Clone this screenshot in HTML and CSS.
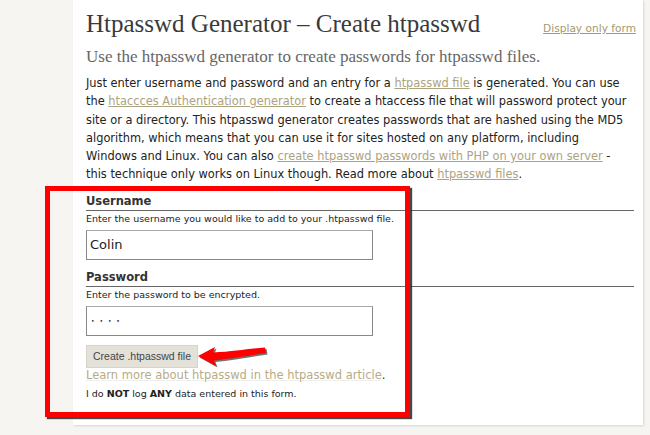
FILE: index.html
```html
<!DOCTYPE html>
<html>
<head>
<meta charset="utf-8">
<link rel="stylesheet" href="styles.css">
</head>
<body>
<div class="card">
  <div class="head">
    <h1>Htpasswd Generator – Create htpasswd</h1>
    <a class="small-link" href="#">Display only form</a>
  </div>
  <h2>Use the htpasswd generator to create passwords for htpasswd files.</h2>
  <p class="intro">Just enter username and password and an entry for a <a href="#">htpasswd file</a> is generated. You can use<br>the <a href="#">htaccces Authentication generator</a> to create a htaccess file that will password protect your<br>site or a directory. This htpasswd generator creates passwords that are hashed using the MD5<br>algorithm, which means that you can use it for sites hosted on any platform, including<br>Windows and Linux. You can also <a href="#">create htpasswd passwords with PHP on your own server</a> -<br>this technique only works on Linux though. Read more about <a href="#">htpasswd files</a>.</p>
  <form class="form">
    <div class="field">
      <div class="label">Username</div>
      <div class="help">Enter the username you would like to add to your .htpasswd file.</div>
      <div class="input">Colin</div>
    </div>
    <div class="field">
      <div class="label">Password</div>
      <div class="help">Enter the password to be encrypted.</div>
      <div class="input pw">• • • •</div>
    </div>
    <div class="btn">Create .htpasswd file</div>
    <div class="learn"><a href="#">Learn more about htpasswd in the htpasswd article</a>.</div>
    <div class="note">I do <b>NOT</b> log <b>ANY</b> data entered in this form.</div>
  </form>
</div>
<div class="redbox"></div>
<svg class="arrow" width="80" height="30" viewBox="0 0 80 30">
  <path d="M3 14 L20 5 L18 10.5 C40 9.5 55 6.5 70 5.5 L71 11 C56 13 40 16 19 18.5 L21 24 Z" fill="#333" transform="translate(1.5,1.5)" opacity="0.7"/>
  <path d="M3 14 L20 5 L18 10.5 C40 9.5 55 6.5 70 5.5 L71 11 C56 13 40 16 19 18.5 L21 24 Z" fill="#f00"/>
</svg>
</body>
</html>
```

FILE: styles.css
```css
html, body {
  margin: 0;
  padding: 0;
}
body {
  background: #f6f5f1;
  width: 650px;
  height: 435px;
  overflow: hidden;
  position: relative;
  font-family: "DejaVu Sans", "Noto Sans", sans-serif;
}
.card {
  margin-left: 73px;
  width: 570px;
  height: 425px;
  background: #fff;
  box-shadow: 1px 1px 2px rgba(0,0,0,0.12);
  box-sizing: border-box;
  padding: 0 9px 0 13px;
  display: flex;
  flex-direction: column;
}
.head {
  display: flex;
  justify-content: space-between;
  align-items: baseline;
  height: 46px;
}
h1 {
  font-family: "Liberation Serif", serif;
  font-weight: normal;
  font-size: 25px;
  color: #3a3a3a;
  margin: 10px 0 0 0;
}
.small-link {
  font-size: 10.6px;
  color: #a39a6e;
  margin-right: -2px;
}
h2 {
  font-family: "Liberation Serif", serif;
  font-weight: normal;
  font-size: 17px;
  color: #666;
  margin: 0;
  line-height: 22px;
}
.intro {
  font-size: 11.4px;
  line-height: 18.3px;
  color: #222;
  margin: 6px 0 0 0;
}
.intro a {
  color: #aca37f;
}
.form {
  margin-top: 11px;
  display: flex;
  flex-direction: column;
}
.field {
  display: flex;
  flex-direction: column;
  margin-bottom: 11px;
}
.field + .field {
  margin-bottom: 9px;
}
.label {
  font-size: 11.5px;
  font-weight: bold;
  color: #333;
  border-bottom: 1px solid #666;
  line-height: 13px;
  padding-bottom: 2px;
}
.help {
  font-size: 9.5px;
  color: #222;
  line-height: 12px;
  margin-top: 2px;
}
.input {
  margin-top: 5px;
  width: 287px;
  height: 30px;
  box-sizing: border-box;
  border: 1px solid #888;
  border-top-color: #aaa;
  font-size: 13px;
  color: #222;
  padding: 0 3px;
  display: flex;
  align-items: center;
}
.input.pw {
  font-size: 6px;
  letter-spacing: 1.5px;
  padding-left: 4px;
}
.btn {
  width: 112px;
  height: 23px;
  background: #e4e1d9;
  border: 1px solid #d8d4ca;
  box-sizing: border-box;
  font-family: "Liberation Sans", sans-serif;
  font-size: 10.5px;
  color: #444;
  display: flex;
  align-items: center;
  justify-content: center;
}
.learn {
  font-size: 11.5px;
  line-height: 15px;
  color: #333;
}
.learn a {
  color: #b6ac86;
  text-decoration-color: #eee;
}
.note {
  font-size: 9.5px;
  color: #222;
  margin-top: 5px;
}
.redbox {
  position: absolute;
  left: 45px;
  top: 186px;
  width: 355px;
  height: 221px;
  border: 5px solid #f00;
  box-shadow: 2px 2px 1px rgba(40,40,40,0.85);
}
.arrow {
  position: absolute;
  left: 195px;
  top: 342px;
}
```
